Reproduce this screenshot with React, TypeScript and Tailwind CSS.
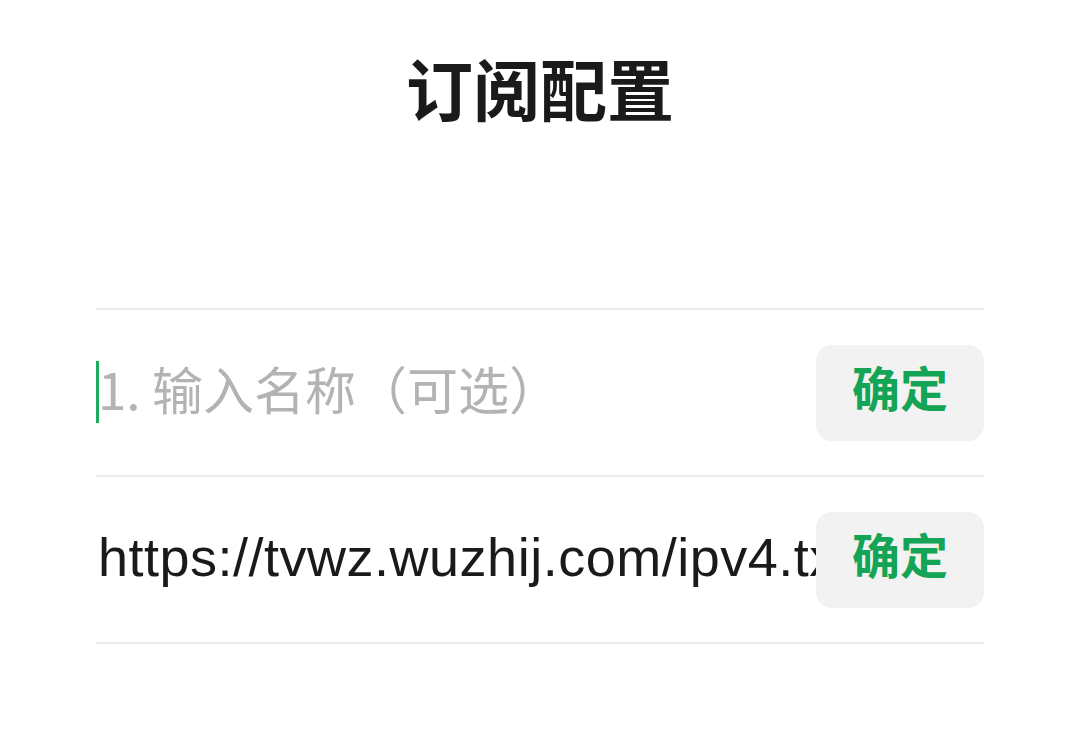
import { useState } from "react";

const font = { fontFamily: '"Noto Sans CJK SC", "Noto Sans", sans-serif' };
const urlFont = { fontFamily: '"Liberation Sans", "Noto Sans CJK SC", sans-serif' };

function Row({ value, placeholder, focused }: { value?: string; placeholder: string; focused?: boolean }) {
  const [text, setText] = useState(value ?? "");
  return (
    <div className="flex h-[167px] items-center border-b-2 border-[#ebebeb]">
      <div className={value ? "relative flex h-[96px] flex-1 items-center overflow-hidden pb-[4px]" : "relative flex h-[96px] flex-1 items-center overflow-hidden pb-[8px]"}>
        {focused && <div className="absolute left-0 top-[16px] h-[62px] w-[3px] bg-[#1aad5c]" />}
        <input
          value={text}
          onChange={(e) => setText(e.target.value)}
          placeholder={placeholder}
          className={
            value
              ? "w-full bg-transparent pl-[2px] text-[54px] tracking-[0.5px] text-[#1a1a1a] outline-none caret-transparent"
              : "w-full bg-transparent pl-[2px] text-[51px] text-[#1a1a1a] placeholder-[#b3b3b3] outline-none caret-transparent"
          }
          style={value ? urlFont : font}
        />
      </div>
      <button className="h-[96px] w-[168px] shrink-0 rounded-[16px] bg-[#f2f2f2] pb-[14px] text-[48px] font-bold text-[#13a456]">
        确定
      </button>
    </div>
  );
}

export default function App() {
  return (
    <div className="min-h-screen bg-white" style={font}>
      <div className="flex h-[184px] items-center justify-center pb-[12px]">
        <h1 className="text-[67px] font-bold leading-none text-[#1a1a1a]">订阅配置</h1>
      </div>
      <div className="mx-[96px] mt-[124px] border-t-2 border-[#ebebeb]">
        <Row placeholder="1. 输入名称（可选）" focused />
        <Row value="https://tvwz.wuzhij.com/ipv4.txt" placeholder="" />
      </div>
    </div>
  );
}
